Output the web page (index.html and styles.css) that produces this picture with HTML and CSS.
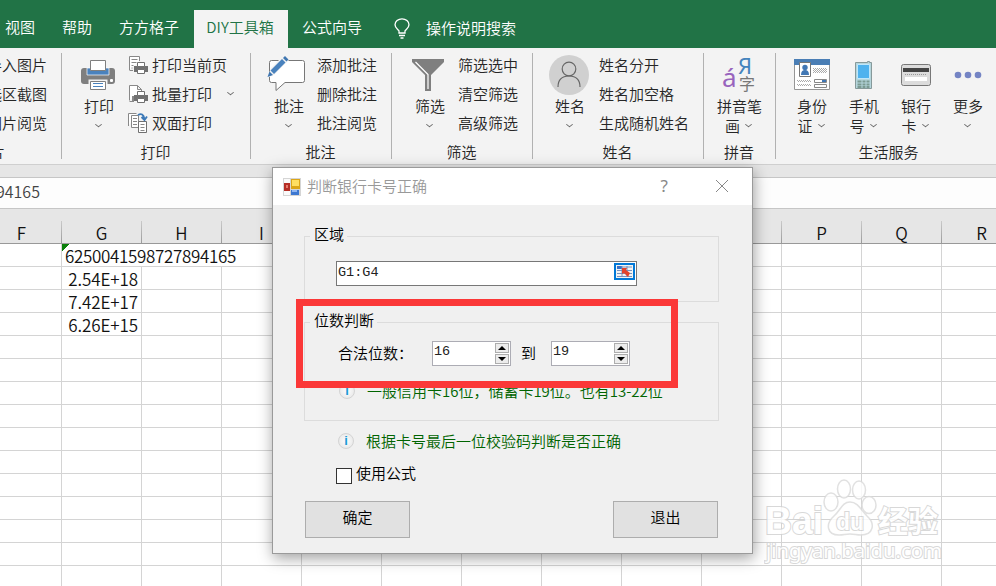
FILE: index.html
```html
<!DOCTYPE html>
<html lang="zh-CN">
<head>
<meta charset="utf-8">
<title>DIY工具箱</title>
<link rel="stylesheet" href="styles.css">
</head>
<body>
<div class="app">
  <nav class="tabs">
    <span class="tab">视图</span>
    <span class="tab">帮助</span>
    <span class="tab">方方格子</span>
    <span class="tab active">DIY工具箱</span>
    <span class="tab">公式向导</span>
    <svg class="bulb" width="18" height="22" viewBox="0 0 18 22" fill="none" stroke="#fff" stroke-width="1.3"><path d="M6 15v-2.200C4.500 11 2 9.800 2 6.800a7 6 0 0 1 14 0c0 3-2.500 4.200-4 6V15zM6 17.500h6M7.500 20h3"/></svg>
    <span class="search">操作说明搜索</span>
  </nav>

  <div class="ribbon">
    <section class="group first">
      <div class="body"><div class="list"><span>导入图片</span><span>选区截图</span><span>图片阅览</span></div></div>
      <div class="label">图片</div>
    </section>

    <section class="group">
      <div class="body">
        <div class="big print">
          <svg width="36" height="44" viewBox="0 0 36 44"><path d="M4 15h28q3 0 3 3v10q0 3-3 3H4q-3 0-3-3V18q0-3 3-3z" fill="#7f7f7f"/><path d="M7 15h22v7H7z" fill="#4a82bd" stroke="#fff" stroke-width=".7"/><path d="M10.500 7.500h15v10h-15z" fill="#fff" stroke="#7f7f7f"/><path d="M8.500 26.500h19v11h-19z" fill="#f3f3f3"/><path d="M10.500 28.500h15v8h-15z" fill="#fff" stroke="#7f7f7f"/><path d="M13 30.500h10M13 33.500h10" stroke="#4a82bd"/><rect x="30" y="26" width="3" height="3" rx="1" fill="#fff"/></svg>
          <span>打印</span><i class="chev"></i>
        </div>
        <div class="list icons">
          <span><svg width="20" height="20" viewBox="0 0 20 20"><path d="M1.500 15V1.500h10V6M1.500 15.500H5" fill="#fff" stroke="#888"/><path d="M3.500 4.500h6M3.500 7.500h5M3.500 10.500h2M3.500 13h1" stroke="#888"/><path d="M6 11h14v6H6z" fill="#707070"/><path d="M9.500 7.500h7v4h-7zM9.500 14.500h7v4h-7z" fill="#fff" stroke="#707070"/></svg>打印当前页</span>
          <span><svg width="20" height="20" viewBox="0 0 20 20"><path d="M1.500 16.500v-15h8l4 4V8M1.500 17.500H6M9.500 1.500v4h4" fill="#fff" stroke="#888"/><path d="M4 12h3v5H4z" fill="#888"/><path d="M6 11h14v6H6z" fill="#707070"/><path d="M9.500 7.500h7v4h-7zM9.500 14.500h7v4h-7z" fill="#fff" stroke="#707070"/></svg>批量打印<i class="chev side"></i></span>
          <span><svg width="20" height="20" viewBox="0 0 20 20"><path d="M.500 13V.500h8M3.500 2.500h7v12h-7z" fill="#fff" stroke="#888"/><path d="M5 5.500h4M5 8.500h4M5 11.500h4" stroke="#888"/><path d="M10.500 8.500h8v11h-8z" fill="#fff" stroke="#707070"/><path d="M12.500 11.500h4M12.500 14.500h4M12.500 17.500h4" stroke="#888"/><path d="M10 2q5-3 6.500 4M13.500 4l3 3 2.500-3.500" fill="none" stroke="#3d7ab8" stroke-width="1.800"/></svg>双面打印</span>
        </div>
      </div>
      <div class="label">打印</div>
    </section>

    <section class="group">
      <div class="body">
        <div class="big note">
          <svg width="40" height="44" viewBox="0 0 40 44"><path d="M5.500 7.500h31q2 0 2 2v18q0 2-2 2H19l-9 8v-8H5.500q-2 0-2-2v-18q0-2 2-2z" fill="#fff" stroke="#777"/><path d="M5 15L18 2l5 5L8 22l-7 3z" fill="#f3f3f3"/><path d="M4.500 17.500L16 6l3.500 3.500L8 21z" fill="#4a82bd"/><path d="M17 5l2-2 3.500 3.500-2 2zM3.500 18.500L7 22l-5.500 2z" fill="#3f76b0"/></svg>
          <span>批注</span><i class="chev"></i>
        </div>
        <div class="list"><span>添加批注</span><span>删除批注</span><span>批注阅览</span></div>
      </div>
      <div class="label">批注</div>
    </section>

    <section class="group">
      <div class="body">
        <div class="big filter">
          <svg width="34" height="44" viewBox="0 0 34 44"><path d="M1 6h32v3L20 22v16h-6V22L1 9z" fill="#7f7f7f"/><path d="M4.500 9L17 21.500V36" fill="none" stroke="#fff" stroke-width="1.200"/></svg>
          <span>筛选</span><i class="chev"></i>
        </div>
        <div class="list"><span>筛选选中</span><span>清空筛选</span><span>高级筛选</span></div>
      </div>
      <div class="label">筛选</div>
    </section>

    <section class="group">
      <div class="body">
        <div class="big person">
          <svg width="42" height="44" viewBox="0 0 42 44"><circle cx="20" cy="22" r="20" fill="#d0d0d0"/><circle cx="20" cy="16" r="6.800" fill="none" stroke="#666" stroke-width="1.200"/><path d="M9 34q0-11 11-11t11 11" fill="none" stroke="#666" stroke-width="1.200"/></svg>
          <span>姓名</span><i class="chev"></i>
        </div>
        <div class="list"><span>姓名分开</span><span>姓名加空格</span><span>生成随机姓名</span></div>
      </div>
      <div class="label">姓名</div>
    </section>

    <section class="group">
      <div class="body center">
        <div class="big">
          <svg width="36" height="44" viewBox="0 0 36 44" class="pinyin"><text x="1" y="34" font-size="26" fill="#9864bd">á</text><text x="17" y="21" font-size="22" fill="#4584bd">Я</text><text x="18" y="37" font-size="16" fill="#777">字</text></svg>
          <span>拼音笔</span><span>画<i class="chev"></i></span>
        </div>
      </div>
      <div class="label">拼音</div>
    </section>

    <section class="group last">
      <div class="body life">
        <div class="big">
          <svg width="36" height="44" viewBox="0 0 36 44"><path d="M.500 6.500h35v30H.500z" fill="#fff" stroke="#969696"/><path d="M0 6h36v6H0z" fill="#4a7eb5"/><path d="M5.500 9.500h11v14h-11z" fill="#fff" stroke="#777"/><circle cx="11" cy="14.500" r="2.700" fill="#4177b4"/><path d="M7 22q0-5 4-5t4 5z" fill="#4177b4"/><g stroke="#aaa" stroke-dasharray="1 1"><path d="M19 15.500h14M20 16.500h13M19 17.500h14M20 18.500h13M19 19.500h14M3 27.500h14M4 28.500h13M3 31.500h14M4 32.500h13"/></g><path d="M20.500 26.500h12v3h-12zM20.500 31.500h12v3h-12z" fill="#fff" stroke="#888"/><path d="M28 27h4v2h-4z" fill="#4177b4"/></svg>
          <span>身份</span><span>证<i class="chev"></i></span>
        </div>
        <div class="big">
          <svg width="18" height="44" viewBox="0 0 18 44"><path d="M.500 9.500h12v-1h2v1h2v26H.500z" fill="#b5d5db" stroke="#86999a"/><path d="M2.500 11.500h12v14h-12z" fill="#4eb2ee" stroke="#bfe6fa"/><path d="M2.500 28.500h4m1 0h3m1 0h3M2.500 31.500h4m1 0h3m1 0h3M2.500 34h4m1 0h3m1 0h3" stroke="#7b9a92" stroke-width="2"/></svg>
          <span>手机</span><span>号<i class="chev"></i></span>
        </div>
        <div class="big">
          <svg width="30" height="44" viewBox="0 0 30 44"><rect x=".5" y="11.500" width="29" height="21" rx="2" fill="#dcdcdc" stroke="#777"/><path d="M2 15h26v4H2z" fill="#444"/><path d="M4 24h22v4H4z" fill="#fff"/><path d="M4 21.500h22" stroke="#999" stroke-dasharray="1 1"/></svg>
          <span>银行</span><span>卡<i class="chev"></i></span>
        </div>
        <div class="big">
          <svg width="28" height="44" viewBox="0 0 28 44" fill="#7484c4"><circle cx="4" cy="22" r="3.300"/><circle cx="14" cy="22" r="3.300"/><circle cx="24" cy="22" r="3.300"/></svg>
          <span>更多</span><i class="chev"></i>
        </div>
      </div>
      <div class="label">生活服务</div>
    </section>
  </div>

  <div class="formula">94165</div>

  <div class="heads">
    <span class="f">F</span><span>G</span><span>H</span><span>I</span><span>J</span><span>K</span><span>L</span><span>M</span><span>N</span><span>O</span><span>P</span><span>Q</span><span>R</span>
  </div>
  <div class="sheet">
    <div class="cell long">6250041598727894165</div>
    <div class="cell">2.54E+18</div>
    <div class="cell">7.42E+17</div>
    <div class="cell">6.26E+15</div>
  </div>
</div>

<svg class="watermark" width="184" height="100" viewBox="0 0 184 100">
  <g fill="#fff" stroke="#dcdcdc" stroke-width="1.500">
    <ellipse cx="67" cy="32" rx="7" ry="9"/><ellipse cx="80" cy="19" rx="6.500" ry="9"/><ellipse cx="95" cy="20" rx="6.500" ry="9"/><ellipse cx="105" cy="35" rx="7" ry="8.500"/>
    <path d="M86 32c8 0 11 8 17 14 9 8 6 19-6 19-5 0-6-1-11-1s-6 1-11 1c-12 0-14-11-5-19 7-6 8-14 16-14z"/>
  </g>
  <g class="outline">
    <text x="1" y="64" font-size="39" textLength="58" lengthAdjust="spacingAndGlyphs">Bai</text>
    <text x="72" y="60" font-size="23" textLength="28">du</text>
    <text x="114" y="62" font-size="30">经验</text>
    <text x="2" y="88" font-size="20" textLength="176" lengthAdjust="spacingAndGlyphs" class="url">jingyan.baidu.com</text>
  </g>
</svg>

<div class="dialog">
  <header>
    <svg width="18" height="18" viewBox="0 0 18 18"><path d="M0 0h18v18H0z" fill="#d5d5d5"/><path d="M1 1h6v4H1zM1 13h6v4H1z" fill="#fafafa"/><path d="M1 5h6v8H1z" fill="#b52e26"/><path d="M3 7h2v3H3z" fill="#e77c6d"/><path d="M8 1h9v10H8z" fill="#dca618"/><path d="M9 2h7v6H9z" fill="#ffdf62"/><path d="M8 12h8v5H8z" fill="#3d78d1"/><path d="M9 12h5v2H9z" fill="#8fb6f2"/></svg>
    <span class="title">判断银行卡号正确</span>
    <span class="help">?</span>
    <svg class="close" width="14" height="14" viewBox="0 0 14 14"><path d="M1 1l12 12M13 1L1 13" stroke="#888" fill="none"/></svg>
  </header>
  <div class="content">
    <div class="box area">
      <div class="legend">区域</div>
      <div class="field">
        <span class="mono">G1:G4</span>
        <svg width="21" height="17" viewBox="0 0 21 17"><path d="M1 1h19v15H1z" fill="#f2f3f2" stroke="#0078d7" stroke-width="2"/><path d="M3 3h5v3H3z" fill="#3870c6"/><path d="M8 4h10M3 7.500h15M3 10.500h15M3 13.500h15M8 3v11M13 3v11" stroke="#7792be" fill="none"/><path d="M8 5h5l-1 2 4 3-2 4-4-4-2 1z" fill="#e2432b"/></svg>
      </div>
    </div>
    <div class="box digits">
      <div class="legend">位数判断</div>
      <div class="range">
        <span class="caption">合法位数：</span>
        <div class="spin"><span class="mono">16</span><div class="arrows"><i class="up"></i><i class="down"></i></div></div>
        <span class="to">到</span>
        <div class="spin"><span class="mono">19</span><div class="arrows"><i class="up"></i><i class="down"></i></div></div>
      </div>
      <div class="tip"><b class="info">i</b><span>一般信用卡<span class="num">16</span>位，储蓄卡<span class="num">19</span>位。也有<span class="num">13-22</span>位</span></div>
    </div>
    <div class="tip second"><b class="info">i</b><span>根据卡号最后一位校验码判断是否正确</span></div>
    <label class="check"><i></i><span>使用公式</span></label>
    <div class="actions"><div class="btn">确定</div><div class="btn">退出</div></div>
  </div>
  <div class="mark"></div>
</div>
</body>
</html>
```

FILE: styles.css
```css
* { box-sizing: border-box; }
body {
  margin: 0;
  width: 996px;
  height: 586px;
  overflow: hidden;
  position: relative;
  font: 350 15px/20px "Noto Sans CJK SC", sans-serif;
  color: #262626;
}
i { font-style: normal; }
.app { width: 996px; height: 586px; overflow: hidden; background: #fff; }

/* tabs */
.tabs { height: 48px; padding: 10px 0 0 5px; background: #217346; color: #fff; display: flex; white-space: nowrap; }
.tab { line-height: 33px; margin-right: 27px; }
.tab.active { width: 94px; margin: 0 14px 0 -12px; padding-right: 2px; text-align: center; background: #f3f3f3; color: #217346; }
.bulb { margin: 8px 15px 0 4px; }
.search { line-height: 35px; }

/* ribbon */
.ribbon {
  height: 117px;
  padding-top: 5px;
  background: #f3f3f3;
  border-bottom: 1px solid #cfcfcf;
  display: grid;
  grid-template-columns: 62px 189px 141px 141px 171px 72px 226px;
}
.group { height: 106px; border-right: 1px solid #b1b1b1; white-space: nowrap; }
.group.last { border-right: 0; }
.group.first { overflow: hidden; }
.first .list { margin-left: -13px; }
.first .label { margin-left: -25px; text-align: left; }
.body { height: 88px; display: flex; }
.body.center { justify-content: center; }
.label { text-align: center; line-height: 22px; height: 18px; padding-right: 1px; }
.list { display: flex; flex-direction: column; margin-top: -3px; }
.list > span { height: 29px; line-height: 29px; display: flex; align-items: center; }
.icons { margin-left: -1px; }
.icons svg { margin-right: 4px; }
.big { display: flex; flex-direction: column; align-items: center; }
.big > svg { height: 44px; flex: none; margin-bottom: -1px; }
.big > span { line-height: 20px; height: 20px; display: flex; align-items: center; }
.chev { width: 5px; height: 5px; border: solid #666; border-width: 0 1px 1px 0; transform: scaleY(.8) rotate(45deg); display: block; }
.big > .chev { margin: 6px 2px 0 0; }
.big > span > .chev { margin: -4px 3px 0 6px; }
.chev.side { margin: -2px 0 0 16px; }
.print { width: 60px; margin-left: 7px; }
.print > svg { margin-left: -2px; }
.note { width: 56px; margin-left: 10px; }
.note > svg { margin-left: -7px; }
.filter { width: 56px; margin-left: 10px; }
.filter > svg { margin-left: -4px; }
.person { width: 58px; margin-left: 8px; }
.life { padding-left: 10px; }
.life .big { width: 52px; }
.pinyin { overflow: visible; font-family: "Noto Sans", "Noto Sans CJK SC", sans-serif; font-weight: 400; }

/* formula bar */
.formula {
  height: 32px;
  margin-top: 12px;
  background: #fdfdfd;
  border: solid #c6c6c6;
  border-width: 1px 0;
  line-height: 27px;
  font-size: 16px;
  text-indent: -4px;
  color: #444;
  box-shadow: 0 -12px 0 #e6e6e6;
}

/* sheet */
.heads, .sheet { display: grid; grid-template-columns: 62px repeat(12, 80px); width: 1022px; }
.heads { height: 35px; padding-top: 12px; background: #e6e6e6; border-bottom: 1px solid #999; }
.heads span {
  height: 22px;
  line-height: 24px;
  text-align: center;
  font-size: 17px;
  color: #111;
  border-right: 1px solid;
  border-image: linear-gradient(#ccc, #999) 1;
}
.heads .f { padding-right: 18px; }
.sheet {
  height: 345px;
  grid-auto-rows: 23px;
  background:
    linear-gradient(90deg, transparent 79px, #d4d4d4 79px) -18px 0 / 80px 100%,
    linear-gradient(transparent 22px, #d4d4d4 22px) 0 0 / 100% 23px;
}
.cell { grid-column: 2; text-align: right; padding-right: 4px; line-height: 23px; font-size: 17px; letter-spacing: -.1px; color: #111; white-space: nowrap; }
.cell.long {
  grid-column: 2 / span 3;
  height: 22px;
  padding-left: 3px;
  text-align: left;
  letter-spacing: -.33px;
  background: linear-gradient(135deg, #0a800a 5px, #fff 5px);
}

/* watermark */
.watermark { position: absolute; left: 764px; top: 470px; opacity: .85; }
.outline { fill: #fff; stroke: #d2d2d2; stroke-width: 2px; paint-order: stroke; font-family: "Liberation Sans", "Noto Sans CJK SC", sans-serif; font-weight: 700; }
.outline .url { font-family: "Noto Sans", sans-serif; font-weight: 400; }

/* dialog */
.dialog {
  position: absolute;
  left: 272px;
  top: 167px;
  width: 481px;
  height: 387px;
  background: #f0f0f0;
  border: 1px solid #9a9a9a;
  box-shadow: 1px 4px 14px rgba(0, 0, 0, .38);
  color: #000;
}
.dialog header { height: 37px; background: #fff; display: flex; align-items: center; padding: 0 23px 0 10px; color: #999; }
.title { margin: -2px 0 0 6px; flex: 1; }
.help { font: 17px "Noto Sans", sans-serif; color: #888; margin: -2px 47px 0 0; }
.close { margin-top: -1px; }
.content { padding: 31px 33px 0 31px; }
.box { border: 1px solid #dcdcdc; }
.legend { width: max-content; background: #f0f0f0; padding: 0 3px 0 4px; margin: -13px 0 0 5px; line-height: 19px; height: 19px; }
.area { height: 66px; }
.field { width: 301px; height: 25px; margin: 18px 0 0 31px; border: 1px solid #777; background: #fff; display: flex; justify-content: space-between; padding: 1px 1px 0 1px; }
.mono { font: 400 13.5px/20px "Liberation Mono", monospace; color: #222; }
.num { letter-spacing: -.05px; }
.digits { height: 99px; margin-top: 20px; }
.range { display: flex; margin: 12px 0 0 33px; height: 25px; }
.caption { width: 94px; line-height: 24px; }
.to { width: 40px; text-align: center; line-height: 24px; padding-right: 5px; }
.spin { width: 79px; height: 25px; border: 1px solid #acacb4; background: #fff; display: flex; justify-content: space-between; padding: 0 1px; }
.arrows { width: 14px; padding-top: 1px; display: flex; flex-direction: column; gap: 1px; }
.arrows i { height: 10px; background: #ececec; border: 1px solid #adadad; display: flex; align-items: center; justify-content: center; }
.arrows i::after { content: ""; border: solid transparent; border-width: 0 4px; }
.arrows .up::after { border-bottom: 4px solid #000; }
.arrows .down::after { border-top: 4px solid #000; }
.tip { color: #006400; display: flex; align-items: center; gap: 12px; height: 20px; margin: 15px 0 0 34px; white-space: nowrap; }
.tip.second { margin: 10px 0 0 34px; }
.info {
  width: 16px;
  height: 16px;
  border-radius: 50%;
  border: 1px solid #d4d4d4;
  background: radial-gradient(#fff, #e2e2e2);
  font: 700 13px/14px "Liberation Sans", sans-serif;
  text-align: center;
  color: #1c9ad6;
}
.check { display: flex; align-items: center; margin: 12px 0 0 32px; height: 22px; }
.check i { width: 16px; height: 16px; border: 1px solid #333; background: #fff; margin: 4px 4px 0 0; }
.check span { margin-top: -2px; }
.actions { display: flex; justify-content: space-between; margin: 16px 1px 0 1px; }
.btn { width: 105px; height: 37px; border: 1px solid #adadad; background: #e1e1e1; text-align: center; line-height: 30px; }
.mark { position: absolute; left: 23px; top: 131px; width: 382px; height: 89px; border: 7px solid #fb3838; }
```
